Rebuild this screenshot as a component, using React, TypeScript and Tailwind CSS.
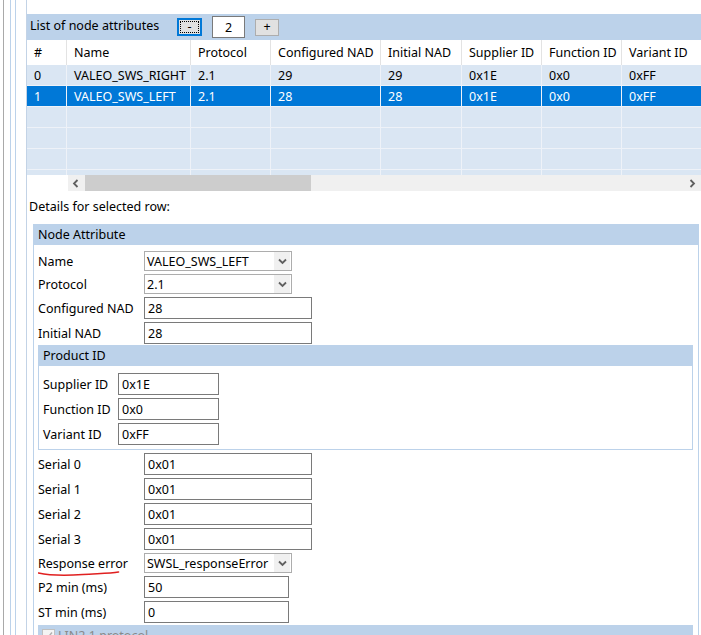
import React from 'react';

const columns = [
  { label: '#', w: 'w-[40px]' },
  { label: 'Name', w: 'w-[124px]' },
  { label: 'Protocol', w: 'w-[80px]' },
  { label: 'Configured NAD', w: 'w-[110px]' },
  { label: 'Initial NAD', w: 'w-[81px]' },
  { label: 'Supplier ID', w: 'w-[80px]' },
  { label: 'Function ID', w: 'w-[80px]' },
  { label: 'Variant ID', w: 'w-[80px]' },
];

const rows = [
  ['0', 'VALEO_SWS_RIGHT', '2.1', '29', '29', '0x1E', '0x0', '0xFF'],
  ['1', 'VALEO_SWS_LEFT', '2.1', '28', '28', '0x1E', '0x0', '0xFF'],
  [],
  [],
  [],
  [],
];

const Chevron = ({ dir }: { dir: 'down' | 'left' | 'right' }) => {
  const d =
    dir === 'down' ? 'M1 2.5 L4.5 6 L8 2.5' : dir === 'left' ? 'M5.5 1 L2 4.5 L5.5 8' : 'M2.5 1 L6 4.5 L2.5 8';
  return (
    <svg width="9" height="9" viewBox="0 0 9 9" className="block">
      <path d={d} fill="none" stroke="#606060" strokeWidth="1.8" />
    </svg>
  );
};

const Combo = ({ value, width }: { value: string; width: string }) => (
  <div className={`${width} h-[20px] border border-[#adadad] bg-white flex items-center`}>
    <span className="flex-1 min-w-0 pl-[2px] pt-[2px] whitespace-nowrap">{value}</span>
    <span className="w-[16px] h-[18px] shrink-0 bg-[#f0f0f0] flex items-center justify-center mr-px">
      <Chevron dir="down" />
    </span>
  </div>
);

const TextBox = ({ value, width }: { value: string; width: string }) => (
  <div className={`${width} h-[22px] border border-[#7a7a7a] bg-white flex items-center pl-[3px] pt-[2px]`}>{value}</div>
);

const Field = ({ label, labelW, children }: { label: React.ReactNode; labelW: string; children: React.ReactNode }) => (
  <div className="flex items-center">
    <div className={`${labelW} shrink-0 whitespace-nowrap pt-[2px]`}>{label}</div>
    {children}
  </div>
);

export default function App() {
  return (
    <div className="w-[701px] h-[635px] overflow-hidden bg-white flex text-[12.5px] leading-none text-black font-['Noto_Sans',sans-serif]">
      {/* window frame lines on the left */}
      <div className="flex shrink-0">
        <div className="w-[3px]" />
        <div className="w-px bg-[#a9a9a9]" />
        <div className="w-[6px]" />
        <div className="w-px bg-[#bcd2ea]" />
        <div className="w-[4px]" />
        <div className="w-px bg-[#bcd2ea]" />
        <div className="w-[10px]" />
      </div>

      <div className="flex-1 min-w-0 flex flex-col border-l border-[#c3d3e6]">
        <div className="h-[14px] shrink-0" />

        {/* list header */}
        <div className="h-[26px] shrink-0 bg-[#bcd2ea] flex items-center pl-[3px]">
          <span className="w-[147px] -mt-[2px]">List of node attributes</span>
          <button className="w-[25px] h-[18px] border-2 border-[#0078d7] bg-[#e1e1e1] p-px flex">
            <span className="flex-1 border border-dotted border-black flex items-center justify-center">-</span>
          </button>
          <div className="ml-[10px] w-[33px] h-[22px] border border-[#7a7a7a] bg-white flex items-center justify-center pt-[2px]">2</div>
          <button className="ml-[10px] w-[24px] h-[17px] border border-[#adadad] bg-[#e1e1e1] flex items-center justify-center pt-px">+</button>
        </div>

        {/* table */}
        <div className="flex h-[25px] shrink-0 bg-white">
          {columns.map((c) => (
            <div key={c.label} className={`${c.w} shrink-0 border-r border-[#e3e3e3] flex items-center pl-[7px] pt-[2px] whitespace-nowrap overflow-hidden`}>
              {c.label}
            </div>
          ))}
        </div>
        <div className="h-[110px] shrink-0 overflow-hidden">
          {rows.map((r, i) => (
            <div key={i} className={`flex h-[21px] border-b border-[#eef2f8] ${i === 1 ? 'bg-[#0078d7] text-white' : 'bg-[#dae6f3]'}`}>
              {columns.map((c, j) => (
                <div key={j} className={`${c.w} shrink-0 border-r border-[#eef2f8] flex items-center pl-[7px] pt-[2px] whitespace-nowrap overflow-hidden`}>
                  {r[j] ?? ''}
                </div>
              ))}
            </div>
          ))}
        </div>

        {/* horizontal scrollbar */}
        <div className="h-[16px] shrink-0 flex">
          <div className="w-[41px] bg-white" />
          <div className="flex-1 bg-[#f0f0f0] flex items-center">
            <div className="w-[17px] flex justify-center">
              <Chevron dir="left" />
            </div>
            <div className="w-[226px] h-full bg-[#cdcdcd]" />
            <div className="flex-1" />
            <div className="w-[17px] flex justify-center">
              <Chevron dir="right" />
            </div>
          </div>
        </div>

        <div className="h-[18px] mt-[6px] pl-[2px] pt-[2px] flex items-center shrink-0">Details for selected row:</div>

        {/* node attribute group */}
        <div className="mt-[9px] ml-[6px] mr-[2px] border-x border-[#bcd2ea] flex-1 flex flex-col">
          <div className="h-[21px] shrink-0 bg-[#bcd2ea] flex items-center pl-[4px] pt-[2px]">Node Attribute</div>
          <div className="pl-[4px] pt-[6px] flex flex-col">
            <div className="flex flex-col gap-[3px]">
              <Field label="Name" labelW="w-[106px]">
                <Combo value="VALEO_SWS_LEFT" width="w-[148px]" />
              </Field>
              <Field label="Protocol" labelW="w-[106px]">
                <Combo value="2.1" width="w-[148px]" />
              </Field>
              <Field label="Configured NAD" labelW="w-[106px]">
                <TextBox value="28" width="w-[168px]" />
              </Field>
              <Field label="Initial NAD" labelW="w-[106px]">
                <TextBox value="28" width="w-[168px]" />
              </Field>
            </div>

            {/* product id group */}
            <div className="mt-px w-[655px] border-x border-b border-[#bcd2ea] pb-[4px]">
              <div className="h-[21px] bg-[#bcd2ea] flex items-center pl-[4px] pt-[2px]">Product ID</div>
              <div className="pl-[4px] pt-[7px] flex flex-col gap-[3px]">
                <Field label="Supplier ID" labelW="w-[75px]">
                  <TextBox value="0x1E" width="w-[101px]" />
                </Field>
                <Field label="Function ID" labelW="w-[75px]">
                  <TextBox value="0x0" width="w-[101px]" />
                </Field>
                <Field label="Variant ID" labelW="w-[75px]">
                  <TextBox value="0xFF" width="w-[101px]" />
                </Field>
              </div>
            </div>

            <div className="mt-[3px] flex flex-col gap-[3px]">
              <Field label="Serial 0" labelW="w-[106px]">
                <TextBox value="0x01" width="w-[168px]" />
              </Field>
              <Field label="Serial 1" labelW="w-[106px]">
                <TextBox value="0x01" width="w-[168px]" />
              </Field>
              <Field label="Serial 2" labelW="w-[106px]">
                <TextBox value="0x01" width="w-[168px]" />
              </Field>
              <Field label="Serial 3" labelW="w-[106px]">
                <TextBox value="0x01" width="w-[168px]" />
              </Field>
              <Field
                labelW="w-[106px]"
                label={
                  <span className="relative inline-block">
                    Response error
                    <svg className="absolute left-0 top-[12px]" width="82" height="8" viewBox="0 0 82 8">
                      <path d="M0.5 3 C12 5.5, 30 5.5, 45 4.5 S72 3.5, 80.5 2" fill="none" stroke="#e02020" strokeWidth="1.6" strokeLinecap="round" />
                    </svg>
                  </span>
                }
              >
                <Combo value="SWSL_responseError" width="w-[148px]" />
              </Field>
              <Field label="P2 min (ms)" labelW="w-[106px]">
                <TextBox value="50" width="w-[145px]" />
              </Field>
              <Field label="ST min (ms)" labelW="w-[106px]">
                <TextBox value="0" width="w-[145px]" />
              </Field>
            </div>

            <div className="mt-[2px] w-[655px] h-[21px] bg-[#bcd2ea] flex items-center pl-[4px] text-[#8a8a8a]">
              <span className="w-[13px] h-[13px] border border-[#c0c0c0] bg-[#f4f4f4] flex items-center justify-center mr-[3px]">
                <svg width="9" height="9" viewBox="0 0 9 9">
                  <path d="M1 4.5 L3.5 7 L8 1.5" fill="none" stroke="#b0b0b0" strokeWidth="1.4" />
                </svg>
              </span>
              <span className="pt-[2px]">LIN2.1 protocol</span>
            </div>
          </div>
        </div>
      </div>
    </div>
  );
}
